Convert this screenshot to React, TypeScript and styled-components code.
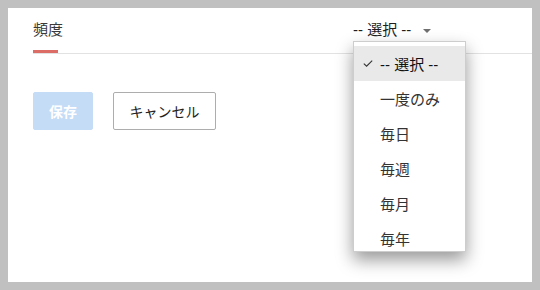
import React from "react";
import styled, { createGlobalStyle } from "styled-components";

const Global = createGlobalStyle`
  html, body { margin: 0; padding: 0; }
  body {
    padding: 8px;
    background: #c0c0c0;
    font-family: "Liberation Sans", "Noto Sans CJK JP", sans-serif;
    overflow: hidden;
  }
  * { box-sizing: border-box; }
`;

const Panel = styled.div`
  position: relative;
  width: 524px;
  height: 274px;
  background: #ffffff;
`;

const Header = styled.div`
  display: grid;
  grid-template-columns: 320px auto;
  align-items: start;
  height: 46px;
  margin-left: 25px;
  border-bottom: 1px solid #e2e2e2;
`;

const Tab = styled.div`
  position: relative;
  justify-self: start;
  height: 45px;
  padding-top: 11px;
  font-size: 15px;
  line-height: 22px;
  color: #3a3a3a;
  &::after {
    content: "";
    position: absolute;
    left: 0;
    bottom: 0;
    width: 25px;
    height: 3px;
    background: #dc6d66;
  }
`;

const SelectWrap = styled.div`
  position: relative;
  justify-self: start;
`;

const Trigger = styled.div`
  display: flex;
  align-items: center;
  gap: 12px;
  padding-top: 11px;
  font-size: 15px;
  line-height: 22px;
  color: #1e1e1e;
`;

const Arrow = styled.span`
  width: 0;
  height: 0;
  border-left: 4px solid transparent;
  border-right: 4px solid transparent;
  border-top: 4px solid #6f6f6f;
  margin-top: 1px;
`;

const Menu = styled.div`
  position: absolute;
  top: 33px;
  left: 0;
  width: 113px;
  height: 211px;
  padding-top: 4px;
  overflow: hidden;
  background: #ffffff;
  border: 1px solid #cdcdcd;
  box-shadow: 0 8px 16px rgba(0, 0, 0, 0.4);
  z-index: 2;
`;

const Item = styled.div<{ $active?: boolean }>`
  position: relative;
  height: 35px;
  padding-left: 26px;
  display: flex;
  align-items: center;
  font-size: 15px;
  color: ${(p) => (p.$active ? "#111" : "#333")};
  background: ${(p) => (p.$active ? "#e9e9e9" : "transparent")};
  white-space: nowrap;
`;

const Check = styled.svg`
  position: absolute;
  left: 9px;
  top: 14px;
`;

const Actions = styled.div`
  display: flex;
  gap: 20px;
  margin: 38px 0 0 25px;
`;

const Button = styled.button<{ $primary?: boolean }>`
  height: 38px;
  width: ${(p) => (p.$primary ? "60px" : "103px")};
  padding: 0;
  font-family: inherit;
  font-size: 14px;
  font-weight: ${(p) => (p.$primary ? 700 : 400)};
  color: ${(p) => (p.$primary ? "#ffffff" : "#222")};
  background: ${(p) => (p.$primary ? "#c4dcf6" : "#ffffff")};
  border: 1px solid ${(p) => (p.$primary ? "#c4dcf6" : "#adadad")};
  border-radius: 2px;
`;

const options = ["-- 選択 --", "一度のみ", "毎日", "毎週", "毎月", "毎年"];

export default function App() {
  return (
    <>
      <Global />
      <Panel>
        <Header>
          <Tab>頻度</Tab>
          <SelectWrap>
            <Trigger>
              <span>-- 選択 --</span>
              <Arrow />
            </Trigger>
            <Menu>
              {options.map((o, i) => (
                <Item key={o} $active={i === 0}>
                  {i === 0 && (
                    <Check width="10" height="7" viewBox="0 0 10 7">
                      <path d="M0.8 3.6 L3.6 6.2 L9.2 0.6" fill="none" stroke="#333" strokeWidth="1.1" />
                    </Check>
                  )}
                  {o}
                </Item>
              ))}
            </Menu>
          </SelectWrap>
        </Header>
        <Actions>
          <Button $primary>保存</Button>
          <Button>キャンセル</Button>
        </Actions>
      </Panel>
    </>
  );
}
